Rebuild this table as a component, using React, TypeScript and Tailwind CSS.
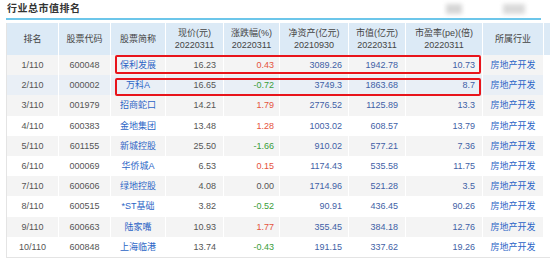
import React from 'react';

type Row = {
  rank: string;
  code: string;
  name: string;
  price: string;
  change: string;
  assets: string;
  cap: string;
  pe: string;
};

const rows: Row[] = [
  { rank: '1/110', code: '600048', name: '保利发展', price: '16.23', change: '0.43', assets: '3089.26', cap: '1942.78', pe: '10.73' },
  { rank: '2/110', code: '000002', name: '万科A', price: '16.65', change: '-0.72', assets: '3749.3', cap: '1863.68', pe: '8.7' },
  { rank: '3/110', code: '001979', name: '招商蛇口', price: '14.21', change: '1.79', assets: '2776.52', cap: '1125.89', pe: '13.3' },
  { rank: '4/110', code: '600383', name: '金地集团', price: '13.48', change: '1.28', assets: '1003.02', cap: '608.57', pe: '13.79' },
  { rank: '5/110', code: '601155', name: '新城控股', price: '25.50', change: '-1.66', assets: '910.02', cap: '577.21', pe: '7.36' },
  { rank: '6/110', code: '000069', name: '华侨城A', price: '6.53', change: '0.15', assets: '1174.43', cap: '535.58', pe: '11.75' },
  { rank: '7/110', code: '600606', name: '绿地控股', price: '4.08', change: '0.00', assets: '1714.96', cap: '521.28', pe: '3.5' },
  { rank: '8/110', code: '600515', name: '*ST基础', price: '3.82', change: '-0.52', assets: '90.91', cap: '436.45', pe: '90.26' },
  { rank: '9/110', code: '600663', name: '陆家嘴', price: '10.93', change: '1.77', assets: '355.45', cap: '384.18', pe: '12.76' },
  { rank: '10/110', code: '600848', name: '上海临港', price: '13.74', change: '-0.43', assets: '191.15', cap: '337.62', pe: '19.26' },
];

const changeColor = (v: string) =>
  v.startsWith('-') ? 'text-[#3a9d3a]' : v === '0.00' ? 'text-[#555555]' : 'text-[#e5533d]';

export default function App() {
  return (
    <div
      className="w-[550px] h-[260px] bg-white overflow-hidden relative"
      style={{ fontFamily: '"Liberation Sans", "Noto Sans CJK SC", sans-serif' }}
    >
      {/* blurred top-right bits */}
      <div className="absolute left-[446px] top-[4px] w-[16px] h-[10px] bg-[#d6d6d6] blur-[2px]" />
      <div className="absolute left-[503px] top-[4px] w-[22px] h-[10px] bg-[#dadada] blur-[2px]" />

      <div className="pl-[7px] pt-[2px] h-[18px] text-[10px] leading-[14px] font-bold text-[#333333] tracking-[0.5px]">
        行业总市值排名
      </div>
      <div className="ml-[6px] w-[535px] h-[2px] bg-[#6cc6ea]" />

      <div className="relative ml-[6px] mt-[3px] border-l border-b border-[#e4e4e4] w-[545px]">
        <div className="flex h-[32px] bg-[#dceaf6] text-[9px] leading-[12px] text-[#444444]">
          <div className="w-[52px] flex items-center justify-center border-r border-white">排名</div>
          <div className="w-[52px] flex items-center justify-center border-r border-white">股票代码</div>
          <div className="w-[55px] flex items-center justify-center border-r border-white">股票简称</div>
          <div className="w-[58px] flex flex-col items-center justify-center border-r border-white">
            <span>现价(元)</span>
            <span>20220311</span>
          </div>
          <div className="w-[56px] flex flex-col items-center justify-center border-r border-white">
            <span>涨跌幅(%)</span>
            <span>20220311</span>
          </div>
          <div className="w-[69px] flex flex-col items-center justify-center border-r border-white">
            <span>净资产(亿元)</span>
            <span>20210930</span>
          </div>
          <div className="w-[57px] flex flex-col items-center justify-center border-r border-white">
            <span>市值(亿元)</span>
            <span>20220311</span>
          </div>
          <div className="w-[77px] flex flex-col items-center justify-center border-r border-white">
            <span>市盈率(pe)(倍)</span>
            <span>20220311</span>
          </div>
          <div className="w-[61px] flex items-center justify-center border-r border-white">所属行业</div>
          <div className="flex-1" />
        </div>

        {rows.map((r, i) => (
          <div
            key={r.code}
            className={`flex h-[20.2px] items-center text-[9px] leading-[12px] ${
              i === 1 ? 'bg-[#e9eff6]' : i % 2 === 0 ? 'bg-[#f4f4f4]' : 'bg-white'
            }`}
          >
            <div className="w-[52px] h-full flex items-center justify-center border-r border-white text-[#555555]">{r.rank}</div>
            <div className="w-[52px] h-full flex items-center justify-center border-r border-white text-[#555555]">{r.code}</div>
            <div className="w-[55px] h-full flex items-center justify-center border-r border-white text-[#2c65c6]">{r.name}</div>
            <div className="w-[58px] h-full flex items-center justify-end pr-[7px] border-r border-white text-[#555555]">{r.price}</div>
            <div className={`w-[56px] h-full flex items-center justify-end pr-[5px] border-r border-white ${changeColor(r.change)}`}>{r.change}</div>
            <div className="w-[69px] h-full flex items-center justify-end pr-[6px] border-r border-white text-[#3f5fa6]">{r.assets}</div>
            <div className="w-[57px] h-full flex items-center justify-end pr-[7px] border-r border-white text-[#3f5fa6]">{r.cap}</div>
            <div className="w-[77px] h-full flex items-center justify-end pr-[7px] border-r border-white text-[#3f5fa6]">{r.pe}</div>
            <div className="w-[61px] h-full flex items-center justify-center border-r border-white text-[#2c65c6]">房地产开发</div>
            <div className="flex-1 h-full bg-white" />
          </div>
        ))}

        {/* highlight boxes */}
        <div className="absolute left-[108px] top-[32px] w-[366px] h-[19px] border-2 border-[#e8141b] rounded-[2px]" />
        <div className="absolute left-[108px] top-[55px] w-[366px] h-[18px] border-2 border-[#e8141b] rounded-[2px]" />
      </div>
    </div>
  );
}
